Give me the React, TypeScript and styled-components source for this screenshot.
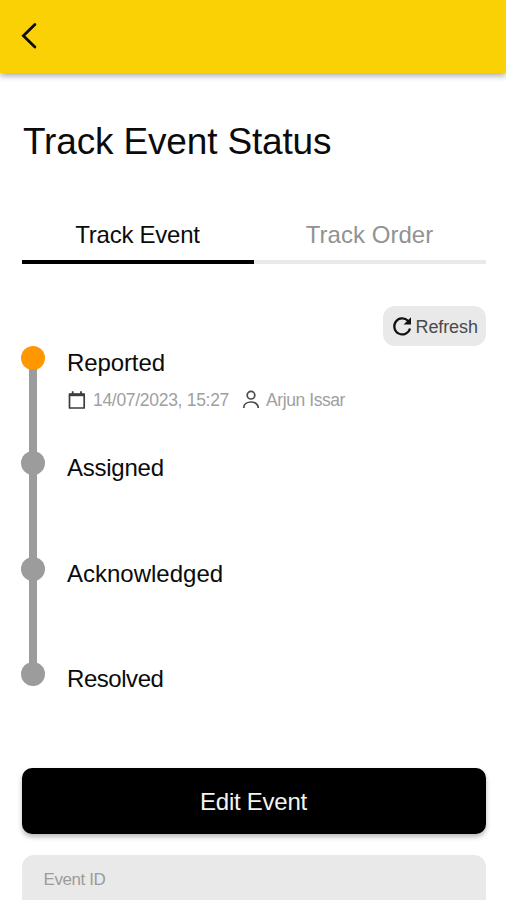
import React from "react";
import styled, { createGlobalStyle } from "styled-components";

const GlobalStyle = createGlobalStyle`
  * { box-sizing: border-box; }
  html, body { margin: 0; height: 100%; overflow: hidden; background: #fff; }
  body, button { font-family: "Liberation Sans", Arial, sans-serif; }
`;

const Screen = styled.div`
  height: 900px;
  overflow: hidden;
  background: #fff;
  color: #0b0b0b;
`;

const Header = styled.header`
  height: 72.5px;
  display: flex;
  align-items: center;
  padding-left: 20px;
  background: #fad105;
  box-shadow: 0 3px 6px rgba(0, 0, 0, 0.32);
`;

const BackButton = styled.button`
  display: flex;
  padding: 0;
  border: 0;
  background: none;
`;

const Content = styled.main`
  padding: 0 20.5px 0 21.5px;
`;

const Title = styled.h1`
  margin: 48px 0 0 1.5px;
  font-size: 37px;
  line-height: 42px;
  font-weight: 400;
  letter-spacing: -0.16px;
  white-space: nowrap;
`;

const Tabs = styled.nav`
  display: grid;
  grid-template-columns: 1fr 1fr;
  margin-top: 57px;
`;

const Tab = styled.button<{ $active?: boolean }>`
  height: 44.5px;
  padding: 0 0 10.5px;
  border: 0;
  border-bottom: 4px solid ${(p) => (p.$active ? "#000" : "#e9e9e9")};
  background: none;
  color: ${(p) => (p.$active ? "#0b0b0b" : "#929292")};
  font-size: 24px;
  line-height: 27px;
  letter-spacing: ${(p) => (p.$active ? -0.25 : 0.03)}px;
`;

const Toolbar = styled.div`
  display: flex;
  justify-content: flex-end;
  margin-top: 42px;
`;

const RefreshButton = styled.button`
  display: flex;
  align-items: center;
  gap: 3px;
  width: 103px;
  height: 40px;
  padding: 2px 0 0 9px;
  border: 0;
  border-radius: 12px;
  background: #e9e9e9;
  color: #4a4a4a;
  font-size: 18px;
  letter-spacing: -0.1px;

  svg {
    margin-top: -2px;
  }
`;

const Timeline = styled.ol`
  list-style: none;
  margin: -0.5px 0 0.5px -0.25px;
  padding: 0;
`;

const Step = styled.li`
  display: flex;
  height: 105.5px;
`;

const Rail = styled.div`
  display: flex;
  flex-direction: column;
  align-items: center;
  width: 24px;
  margin-right: 21.75px;
`;

const Dot = styled.span<{ $current?: boolean }>`
  flex: none;
  width: 24px;
  height: 24px;
  border-radius: 50%;
  background: ${(p) => (p.$current ? "#ff9800" : "#9c9c9c")};
`;

const Connector = styled.span`
  flex: 1;
  width: 8px;
  margin: -1px 0;
  background: #9c9c9c;
`;

const StepBody = styled.div`
  padding-top: 3px;
`;

const StepName = styled.div<{ $tracking: number }>`
  font-size: 24px;
  line-height: 28px;
  letter-spacing: ${(p) => p.$tracking}px;
`;

const Meta = styled.div`
  display: flex;
  align-items: center;
  height: 20px;
  margin-top: 13.5px;
  color: #a0a0a0;
  font-size: 17.5px;
  white-space: nowrap;

  svg {
    flex: none;
  }
`;

const MetaText = styled.span<{ $width: number; $tracking: number }>`
  width: ${(p) => p.$width}px;
  margin-left: 6px;
  padding-top: 1px;
  letter-spacing: ${(p) => p.$tracking}px;
`;

const EditButton = styled.button`
  display: block;
  width: 100%;
  height: 66px;
  padding: 2px 0 0;
  border: 0;
  border-radius: 10px;
  background: #000;
  color: #f4f4f4;
  font-size: 24px;
  letter-spacing: -0.25px;
  box-shadow: 0 3px 5px rgba(0, 0, 0, 0.28);
`;

const Field = styled.div`
  height: 80px;
  margin-top: 21px;
  padding: 15px 22px;
  border-radius: 12px;
  background: #e9e9e9;
  color: #9b9b9b;
  font-size: 17px;
  line-height: 20px;
  letter-spacing: -0.42px;
`;

const BackIcon = () => (
  <svg width="18" height="28" viewBox="0 0 18 28" fill="none" stroke="#0b0b0b" strokeWidth="2.8">
    <path d="M14.9 2.4 L3.4 13.7 L14.9 25" strokeLinecap="round" />
  </svg>
);

const RefreshIcon = () => (
  <svg width="21" height="21" viewBox="0 0 21 21" fill="none">
    <path d="M18 12.5 A8 8 0 1 1 16 4.8" stroke="#111" strokeWidth="2.2" />
    <path d="M19 1.2 V8.6 H11.6 Z" fill="#111" />
  </svg>
);

const CalendarIcon = () => (
  <svg width="20" height="20" viewBox="0 0 20 20" fill="none" stroke="#3c3c3c">
    <path d="M2.5 4 H17.2 V18 H2.5 Z" strokeWidth="1.7" strokeLinejoin="round" />
    <path d="M2.5 5 H17.2" strokeWidth="2.4" />
    <path d="M5.7 1.2 V5 M14 1.2 V5" strokeWidth="1.8" />
  </svg>
);

const PersonIcon = () => (
  <svg width="18" height="20" viewBox="0 0 18 20" fill="none" stroke="#4a4a4a" strokeWidth="1.7">
    <circle cx="9" cy="5.2" r="3.8" />
    <path d="M1.7 18 C1.7 10 16.3 10 16.3 18" />
  </svg>
);

const steps = [
  { name: "Reported", tracking: -0.1 },
  { name: "Assigned", tracking: -0.25 },
  { name: "Acknowledged", tracking: 0 },
  { name: "Resolved", tracking: -0.45 },
];

export default function App() {
  return (
    <>
      <GlobalStyle />
      <Screen>
        <Header>
          <BackButton aria-label="Back">
            <BackIcon />
          </BackButton>
        </Header>
        <Content>
          <Title>Track Event Status</Title>
          <Tabs>
            <Tab $active>Track Event</Tab>
            <Tab>Track Order</Tab>
          </Tabs>
          <Toolbar>
            <RefreshButton>
              <RefreshIcon />
              Refresh
            </RefreshButton>
          </Toolbar>
          <Timeline>
            {steps.map((step, i) => (
              <Step key={step.name}>
                <Rail>
                  <Dot $current={i === 0} />
                  {i < steps.length - 1 && <Connector />}
                </Rail>
                <StepBody>
                  <StepName $tracking={step.tracking}>{step.name}</StepName>
                  {i === 0 && (
                    <Meta>
                      <CalendarIcon />
                      <MetaText $width={149} $tracking={-0.3}>14/07/2023, 15:27</MetaText>
                      <PersonIcon />
                      <MetaText $width={90} $tracking={-0.42}>Arjun Issar</MetaText>
                    </Meta>
                  )}
                </StepBody>
              </Step>
            ))}
          </Timeline>
          <EditButton>Edit Event</EditButton>
          <Field>Event ID</Field>
        </Content>
      </Screen>
    </>
  );
}
